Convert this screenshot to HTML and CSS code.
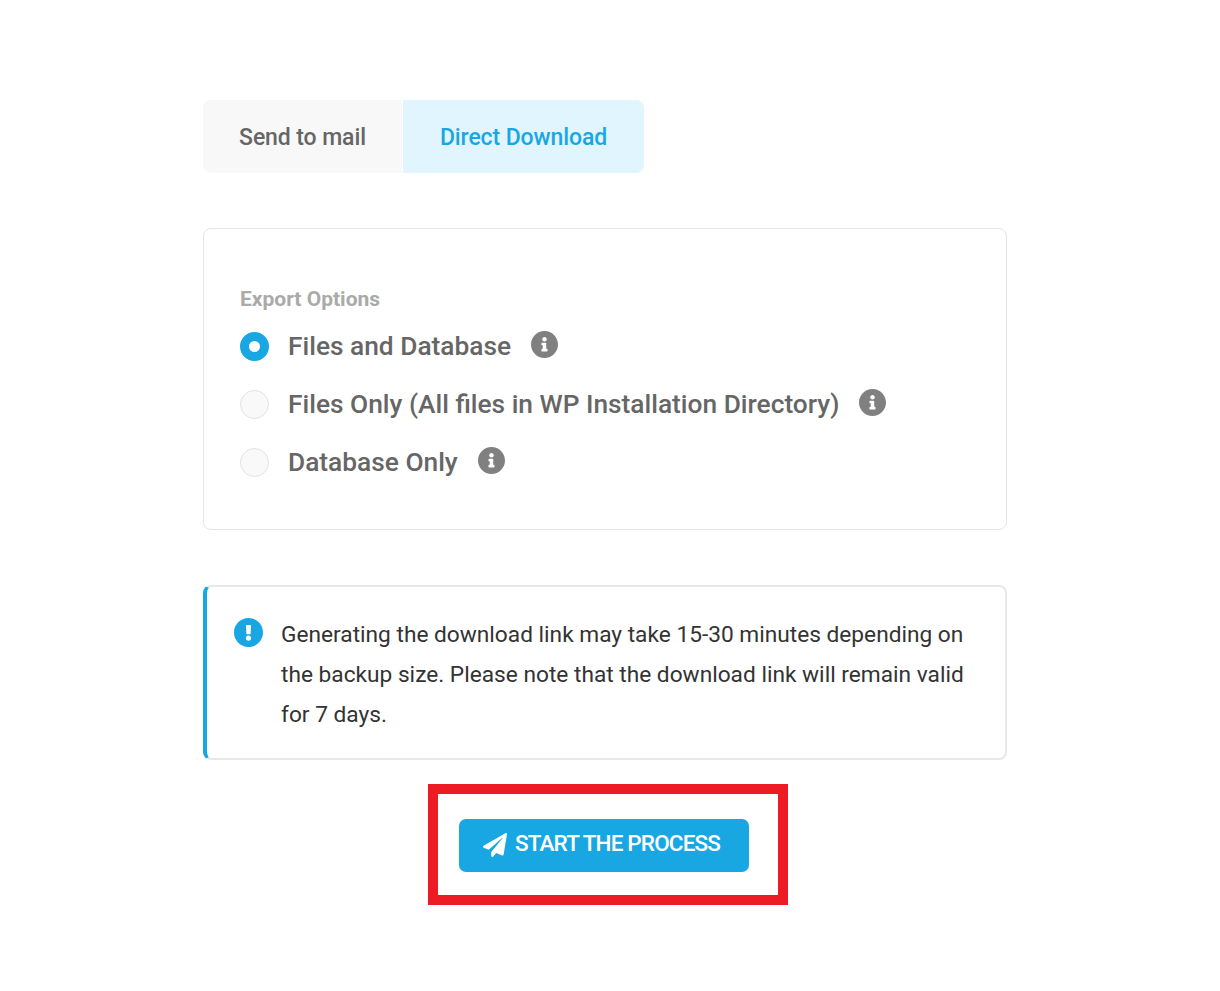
FILE: index.html
```html
<!DOCTYPE html>
<html lang="en">
<head>
    <meta charset="UTF-8">
    <meta name="viewport" content="width=device-width, initial-scale=1.0">
    <title>Export Backup</title>
    <link rel="stylesheet" href="styles.css">
</head>
<body>
    <div class="wrap">
        <div class="tabs">
            <div class="tab">Send to mail</div>
            <div class="tab active">Direct Download</div>
        </div>

        <div class="options">
            <div class="options-title">Export Options</div>
            <div class="option">
                <span class="radio checked"></span>
                <span class="option-label">Files and Database</span>
                <svg class="info" viewBox="8 8 496 496"><path d="M256 8C119.043 8 8 119.083 8 256c0 136.997 111.043 248 248 248s248-111.003 248-248C504 119.083 392.957 8 256 8zm0 110c23.196 0 42 18.804 42 42s-18.804 42-42 42-42-18.804-42-42 18.804-42 42-42zm56 254c0 6.627-5.373 12-12 12h-88c-6.627 0-12-5.373-12-12v-24c0-6.627 5.373-12 12-12h12v-64h-12c-6.627 0-12-5.373-12-12v-24c0-6.627 5.373-12 12-12h64c6.627 0 12 5.373 12 12v100h12c6.627 0 12 5.373 12 12v24z"/></svg>
            </div>
            <div class="option">
                <span class="radio"></span>
                <span class="option-label">Files Only (All files in WP Installation Directory)</span>
                <svg class="info" viewBox="8 8 496 496"><path d="M256 8C119.043 8 8 119.083 8 256c0 136.997 111.043 248 248 248s248-111.003 248-248C504 119.083 392.957 8 256 8zm0 110c23.196 0 42 18.804 42 42s-18.804 42-42 42-42-18.804-42-42 18.804-42 42-42zm56 254c0 6.627-5.373 12-12 12h-88c-6.627 0-12-5.373-12-12v-24c0-6.627 5.373-12 12-12h12v-64h-12c-6.627 0-12-5.373-12-12v-24c0-6.627 5.373-12 12-12h64c6.627 0 12 5.373 12 12v100h12c6.627 0 12 5.373 12 12v24z"/></svg>
            </div>
            <div class="option">
                <span class="radio"></span>
                <span class="option-label">Database Only</span>
                <svg class="info" viewBox="8 8 496 496"><path d="M256 8C119.043 8 8 119.083 8 256c0 136.997 111.043 248 248 248s248-111.003 248-248C504 119.083 392.957 8 256 8zm0 110c23.196 0 42 18.804 42 42s-18.804 42-42 42-42-18.804-42-42 18.804-42 42-42zm56 254c0 6.627-5.373 12-12 12h-88c-6.627 0-12-5.373-12-12v-24c0-6.627 5.373-12 12-12h12v-64h-12c-6.627 0-12-5.373-12-12v-24c0-6.627 5.373-12 12-12h64c6.627 0 12 5.373 12 12v100h12c6.627 0 12 5.373 12 12v24z"/></svg>
            </div>
        </div>

        <div class="notice">
            <svg class="notice-icon" viewBox="8 8 496 496"><path d="M504 256c0 136.997-111.043 248-248 248S8 392.997 8 256C8 119.083 119.043 8 256 8s248 111.083 248 248zm-248 50c-25.405 0-46 20.595-46 46s20.595 46 46 46 46-20.595 46-46-20.595-46-46-46zm-43.673-165.346l7.418 136c.347 6.364 5.609 11.346 11.982 11.346h48.546c6.373 0 11.635-4.982 11.982-11.346l7.418-136c.375-6.874-5.098-12.654-11.982-12.654h-63.383c-6.884 0-12.356 5.78-11.981 12.654z"/></svg>
            <p>Generating the download link may take 15-30 minutes depending on the backup size. Please note that the download link will remain valid for 7 days.</p>
        </div>

        <div class="highlight">
            <button class="start">
                <svg class="plane" viewBox="0 0 512 512"><path d="M476 3.200L12.500 270.600c-18.100 10.400-15.800 35.600 2.200 43.200L121 358.400l287.300-253.200c5.500-4.900 13.300 2.600 8.600 8.300L176 407v80.500c0 23.600 28.500 32.900 42.500 15.800L282 426l124.600 52.200c14.200 6 30.400-2.900 33-18.200l72-432C515 7.800 493.300-6.800 476 3.200z"/></svg>
                START THE PROCESS
            </button>
        </div>
    </div>
</body>
</html>
```

FILE: styles.css
```css
body {
    font-family: Roboto, "Liberation Sans", sans-serif;
    margin: 0;
    background-color: #fff;
}
.wrap {
    width: 804px;
    margin-left: 203px;
    padding-top: 100px;
}
.tabs {
    display: flex;
    width: 441px;
    height: 73px;
    gap: 1px;
}
.tab {
    display: flex;
    align-items: center;
    justify-content: center;
    width: 199px;
    padding-top: 2px;
    font-size: 23px;
    font-weight: 500;
    letter-spacing: -0.1px;
    color: #666;
    background-color: #f8f8f8;
    border-radius: 8px 0 0 8px;
}
.tab.active {
    width: 241px;
    color: #19a7e4;
    background-color: #e1f5fe;
    border-radius: 0 8px 8px 0;
}
.options {
    box-sizing: border-box;
    height: 302px;
    margin-top: 55px;
    padding: 58px 36px 0;
    border: 1px solid #e6e6e6;
    border-radius: 8px;
}
.options-title {
    font-size: 21px;
    font-weight: 700;
    line-height: 24px;
    color: #aaa;
    margin-bottom: 6px;
}
.option {
    display: flex;
    align-items: center;
    height: 58px;
}
.radio {
    box-sizing: border-box;
    width: 29px;
    height: 29px;
    margin-right: 19px;
    background-color: #f9f9f9;
    border: 1px solid #e3e3e3;
    border-radius: 50%;
}
.radio.checked {
    background-color: #fff;
    border: 9px solid #19a7e4;
}
.option-label {
    font-size: 26.3px;
    font-weight: 500;
    color: #666;
}
.info {
    width: 27px;
    height: 27px;
    margin: 0 0 4px 20px;
    fill: #808080;
}
.notice {
    box-sizing: border-box;
    display: flex;
    height: 175px;
    margin-top: 55px;
    padding: 28px 30px 0 27px;
    border: 2px solid #e8e8e8;
    border-left: 4px solid #19a7e4;
    border-radius: 8px;
}
.notice-icon {
    flex: none;
    width: 29px;
    height: 29px;
    margin: 3px 18px 0 0;
    fill: #19a7e4;
}
.notice p {
    margin: 0;
    font-size: 22.7px;
    line-height: 40px;
    color: #333;
}
.highlight {
    box-sizing: border-box;
    display: flex;
    width: 360px;
    height: 121px;
    margin: 24px 0 0 225px;
    padding: 25px 0 0 21px;
    border: 10px solid #ed1c24;
}
.start {
    display: flex;
    align-items: center;
    justify-content: center;
    gap: 8px;
    width: 290px;
    height: 53px;
    padding: 0 5px 5px 0;
    font-family: inherit;
    font-size: 22.5px;
    font-weight: 500;
    letter-spacing: -0.85px;
    color: #fff;
    background-color: #19a7e4;
    border: 0;
    border-radius: 7px;
}
.plane {
    width: 24px;
    height: 24px;
    margin-top: 3px;
    fill: #fff;
}
```
